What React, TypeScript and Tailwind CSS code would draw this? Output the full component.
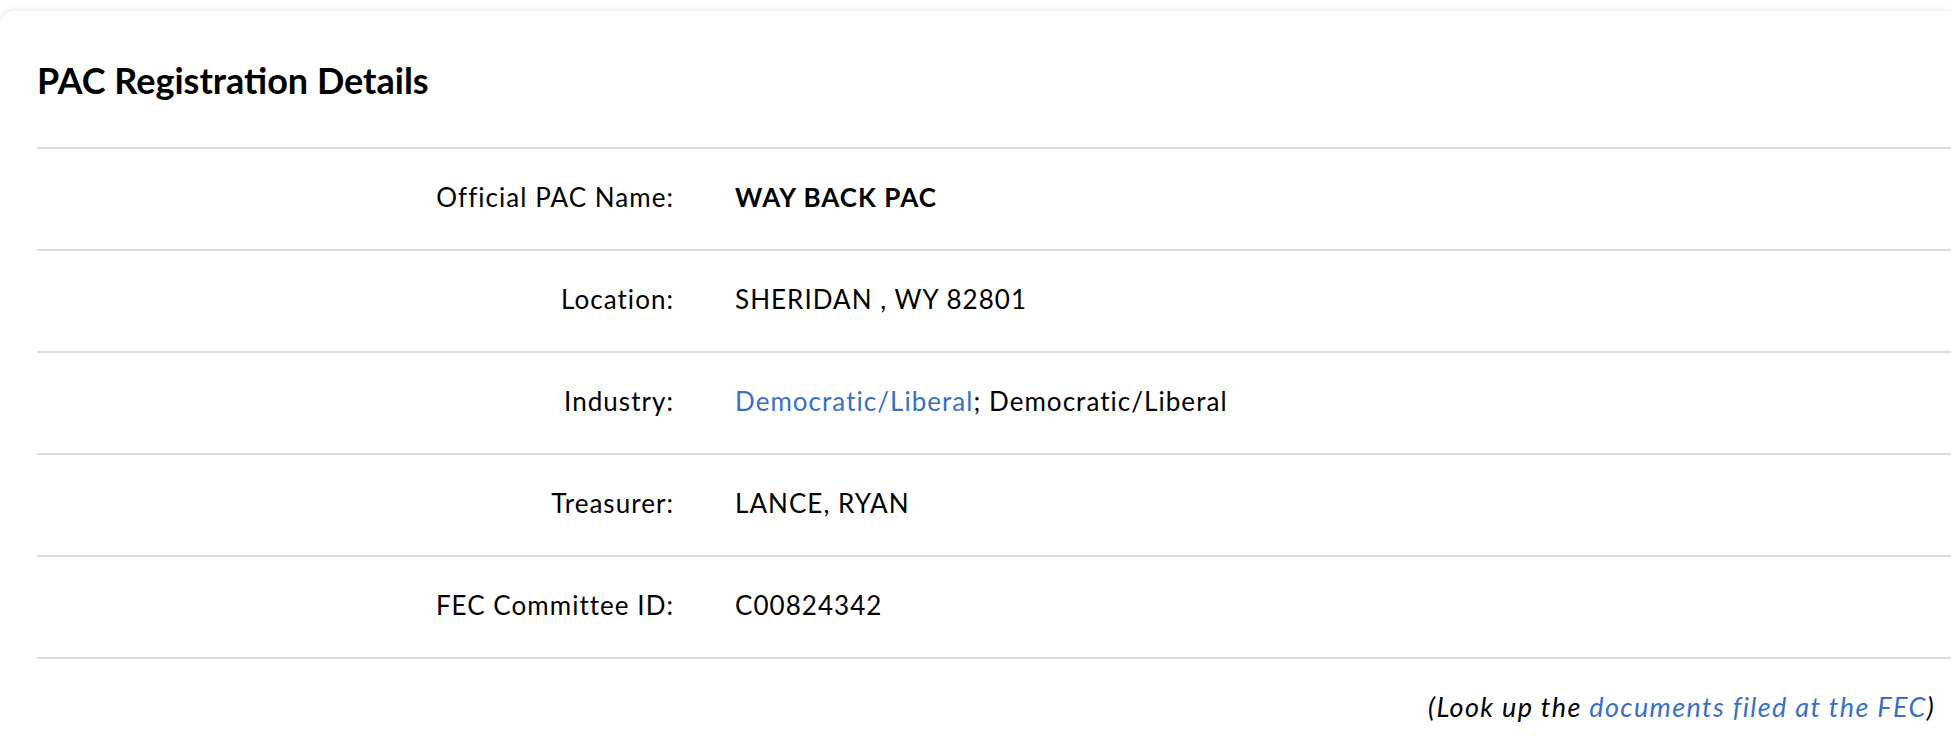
import React from "react";

const rows: { label: string; value: React.ReactNode }[] = [
  { label: "Official PAC Name:", value: <span className="font-bold">WAY BACK PAC</span> },
  { label: "Location:", value: "SHERIDAN , WY 82801" },
  {
    label: "Industry:",
    value: (
      <>
        <a href="#" className="text-[#3b70c4]">Democratic/Liberal</a>; Democratic/Liberal
      </>
    ),
  },
  { label: "Treasurer:", value: "LANCE, RYAN" },
  { label: "FEC Committee ID:", value: "C00824342" },
];

export default function App() {
  return (
    <div
      className="w-full h-[756px] overflow-hidden bg-white pt-[11px] text-black"
      style={{ fontFamily: "Lato, 'Open Sans', sans-serif" }}
    >
      <div className="w-full rounded-tl-[14px] bg-white shadow-[0_0_6px_rgba(0,0,0,0.12)] pb-[120px]">
        <h2 className="pl-[37px] pt-[47px] pb-[45px] text-[36px] leading-[44px] font-bold">
          PAC Registration Details
        </h2>
        <div className="ml-[37px] border-t-2 border-[#dddddd]">
          {rows.map((r) => (
            <div
              key={r.label}
              className="flex items-center h-[102px] pb-[4px] border-b-2 border-[#dddddd] text-[26px] tracking-[0.04em]"
            >
              <div className="w-[637px] text-right">{r.label}</div>
              <div className="pl-[61px]">{r.value}</div>
            </div>
          ))}
        </div>
        <p className="text-right pr-[16px] pt-[28px] text-[27px] italic tracking-[0.05em]">
          (Look up the{" "}
          <a href="#" className="text-[#3b70c4]">documents filed at the FEC</a>)
        </p>
      </div>
    </div>
  );
}
